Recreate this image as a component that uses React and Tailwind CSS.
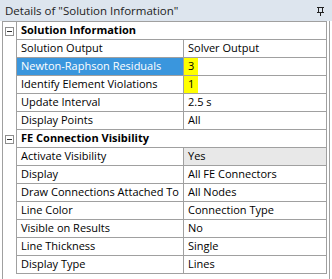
const sections = [
    {
        title: 'Solution Information',
        rows: [
            { label: 'Solution Output', value: 'Solver Output' },
            { label: 'Newton-Raphson Residuals', value: '3', selected: true, mark: true },
            { label: 'Identify Element Violations', value: '1', mark: true },
            { label: 'Update Interval', value: '2.5 s' },
            { label: 'Display Points', value: 'All' },
        ],
    },
    {
        title: 'FE Connection Visibility',
        rows: [
            { label: 'Activate Visibility', value: 'Yes', shaded: true },
            { label: 'Display', value: 'All FE Connectors' },
            { label: 'Draw Connections Attached To', value: 'All Nodes' },
            { label: 'Line Color', value: 'Connection Type' },
            { label: 'Visible on Results', value: 'No' },
            { label: 'Line Thickness', value: 'Single' },
            { label: 'Display Type', value: 'Lines' },
        ],
    },
]

function MinusBox() {
    return (
        <div className="flex h-[9px] w-[9px] items-center justify-center border border-[#8e8e8e] bg-white">
            <div className="h-px w-[5px] bg-[#333]" />
        </div>
    )
}

function PinIcon() {
    return (
        <svg width="9" height="10" viewBox="0 0 9 10" fill="none" stroke="#222" strokeWidth="1" shapeRendering="crispEdges">
            <path d="M1 1.5h7" />
            <path d="M2.5 1.5v4.5h4v-4.5" />
            <path d="M1 6.5h7" />
            <path d="M4.5 6.5v3" />
        </svg>
    )
}

export default function App() {
    return (
        <div className="flex h-[279px] w-[332px] flex-col bg-white text-[11px] text-black" style={{ fontFamily: '"Open Sans", sans-serif' }}>
            <div className="flex h-[21px] shrink-0 items-center justify-between bg-[#dde5ee] pl-[5px] pr-[7px] text-[11.5px] text-[#222]">
                <span>Details of "Solution Information"</span>
                <PinIcon />
            </div>
            <div className="mx-[2px] flex flex-1 flex-col border-x border-[#a0a0a0]">
                <div className="mr-[2px] border-t border-[#a0a0a0]">
                    {sections.map((section) => (
                        <div key={section.title}>
                            <div className="flex h-[18px]">
                                <div className="flex w-[14px] shrink-0 items-center justify-center border-r border-[#a0a0a0] pt-px">
                                    <MinusBox />
                                </div>
                                <div className="flex flex-1 items-center border-b border-r border-[#a0a0a0] pl-[4px] font-bold">
                                    {section.title}
                                </div>
                            </div>
                            {section.rows.map((row) => (
                                <div key={row.label} className="flex h-[18px]">
                                    <div className="w-[14px] shrink-0 border-r border-[#a0a0a0]" />
                                    <div className={`flex w-[167px] shrink-0 items-center border-b border-r border-[#a0a0a0] pl-[4px] ${row.selected ? 'bg-[#3a96dd] text-white' : ''}`}>
                                        {row.label}
                                    </div>
                                    <div className={`flex flex-1 items-stretch border-b border-r border-[#a0a0a0] ${row.shaded ? 'bg-[#e8e8e8]' : ''}`}>
                                        {row.mark ? (
                                            <span className="flex items-center bg-[#ffff00] px-[4px]">{row.value}</span>
                                        ) : (
                                            <span className="flex items-center pl-[4px]">{row.value}</span>
                                        )}
                                    </div>
                                </div>
                            ))}
                        </div>
                    ))}
                </div>
            </div>
        </div>
    )
}
